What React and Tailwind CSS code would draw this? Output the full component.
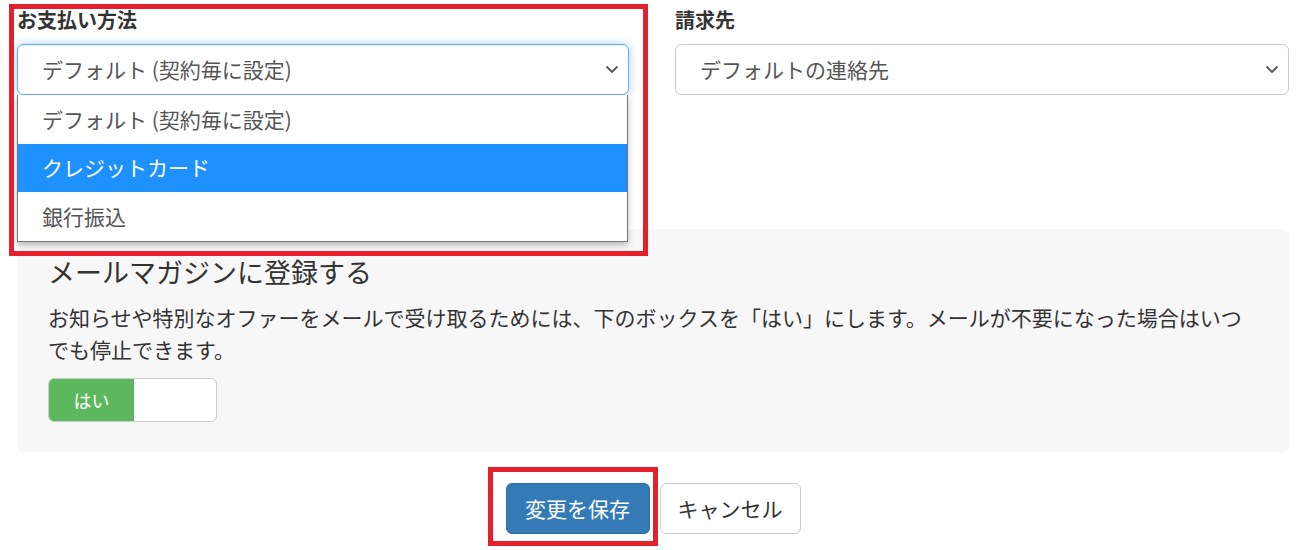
import React from "react";

const Chevron = () => (
  <svg width="14" height="9" viewBox="0 0 14 9" className="shrink-0">
    <polyline points="1.5,1.5 7,7 12.5,1.5" fill="none" stroke="#555" strokeWidth="1.8" />
  </svg>
);

const options = ["デフォルト (契約毎に設定)", "クレジットカード", "銀行振込"];

export default function App() {
  return (
    <div
      className="relative w-[1300px] h-[550px] bg-white pl-[17px] pr-[11px] pt-[5px] text-[#333] overflow-hidden"
      style={{ fontFamily: '"Noto Sans CJK JP", "Noto Sans", sans-serif' }}
    >
      <div className="grid grid-cols-[612px_614px] gap-x-[46px]">
        <div className="relative">
          <label className="block text-[20px] font-bold leading-[30px] mb-[9px]">お支払い方法</label>
          <div className="h-[51px] flex items-center justify-between pl-[24px] pr-[9px] border border-[#66afe9] rounded-[6px] shadow-[inset_0_1px_1px_rgba(0,0,0,0.075),0_0_8px_rgba(102,175,233,0.6)] text-[21px] text-[#555]">
            <span>デフォルト (契約毎に設定)</span>
            <Chevron />
          </div>
          <div className="absolute left-0 top-[90px] w-[611px] bg-white border border-t-0 border-[#767676] shadow-[0_3px_6px_rgba(0,0,0,0.25)] z-10">
            {options.map((o, i) => (
              <div
                key={o}
                className={
                  i === 1
                    ? "h-[48.5px] flex items-center pl-[24px] text-[21px] bg-[#1e90ff] text-white"
                    : "h-[48.5px] flex items-center pl-[24px] text-[21px] text-[#555]"
                }
              >
                {o}
              </div>
            ))}
          </div>
        </div>
        <div>
          <label className="block text-[20px] font-bold leading-[30px] mb-[9px]">請求先</label>
          <div className="h-[51px] flex items-center justify-between pl-[24px] pr-[9px] border border-[#ccc] rounded-[6px] text-[21px] text-[#555]">
            <span>デフォルトの連絡先</span>
            <Chevron />
          </div>
        </div>
      </div>

      <div className="mt-[134px] bg-[#f7f7f7] rounded-[6px] pl-[31px] pr-[31px] pt-[28px] pb-[30px]">
        <h4 className="text-[27px] leading-[30px] mb-[14px] text-[#333]">メールマガジンに登録する</h4>
        <p className="text-[21px] leading-[32px] text-[#333]">
          お知らせや特別なオファーをメールで受け取るためには、下のボックスを「はい」にします。メールが不要になった場合はいつでも停止できます。
        </p>
        <div className="mt-[13px] w-[169px] h-[44px] flex border border-[#ccc] rounded-[6px] overflow-hidden bg-white">
          <div className="w-[85px] bg-[#5cb85c] text-white text-[18px] flex items-center justify-center">はい</div>
        </div>
      </div>

      <div className="mt-[31px] flex justify-center gap-[10px]">
        <button className="h-[51px] w-[144px] rounded-[6px] bg-[#337ab7] border border-[#2e6da4] text-white text-[21px]">
          変更を保存
        </button>
        <button className="h-[51px] w-[141px] rounded-[6px] bg-white border border-[#ccc] text-[#333] text-[21px]">
          キャンセル
        </button>
      </div>

      <div className="absolute left-[9px] top-[4px] w-[639px] h-[252px] border-[5px] border-[#e3202b] pointer-events-none z-20" />
      <div className="absolute left-[488px] top-[467px] w-[170px] h-[79px] border-[5px] border-[#e3202b] pointer-events-none z-20" />
    </div>
  );
}
